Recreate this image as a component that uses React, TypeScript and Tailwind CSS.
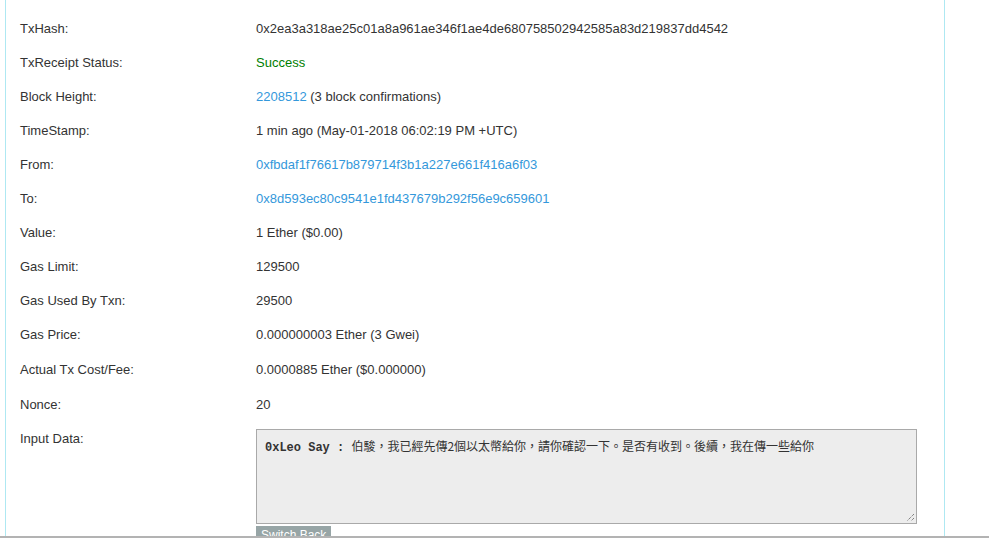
import React from "react";

const rows: { label: string; value: React.ReactNode }[] = [
  { label: "TxHash:", value: "0x2ea3a318ae25c01a8a961ae346f1ae4de680758502942585a83d219837dd4542" },
  { label: "TxReceipt Status:", value: <span className="text-[#008000]">Success</span> },
  {
    label: "Block Height:",
    value: (
      <>
        <span className="text-[#3498db]">2208512</span> (3 block confirmations)
      </>
    ),
  },
  { label: "TimeStamp:", value: "1 min ago (May-01-2018 06:02:19 PM +UTC)" },
  { label: "From:", value: <span className="text-[#3498db]">0xfbdaf1f76617b879714f3b1a227e661f416a6f03</span> },
  { label: "To:", value: <span className="text-[#3498db]">0x8d593ec80c9541e1fd437679b292f56e9c659601</span> },
  { label: "Value:", value: "1 Ether ($0.00)" },
  { label: "Gas Limit:", value: "129500" },
  { label: "Gas Used By Txn:", value: "29500" },
  { label: "Gas Price:", value: "0.000000003 Ether (3 Gwei)" },
  { label: "Actual Tx Cost/Fee:", value: "0.0000885 Ether ($0.000000)" },
  { label: "Nonce:", value: "20" },
];

const heights = ["h-[34px]", "h-[34px]", "h-[34px]", "h-[34px]", "h-[34px]", "h-[34px]", "h-[34px]", "h-[34px]", "h-[34px]", "h-[34px]", "h-[35px]", "h-[35px]"];

export default function App() {
  return (
    <div className="w-[989px] h-[538px] overflow-hidden bg-white flex flex-col" style={{ fontFamily: '"Liberation Sans", Arial, sans-serif' }}>
      <div className="h-[536px] overflow-hidden flex">
        <div className="ml-[5px] w-[940px] h-full border-l border-r border-[#aee8f2] pt-[12px] text-[13px] text-[#333]">
          {rows.map((r, i) => (
            <div key={r.label} className={`flex items-center ${heights[i]}`}>
              <div className="w-[250px] pl-[14px] shrink-0">{r.label}</div>
              <div className="whitespace-nowrap">{r.value}</div>
            </div>
          ))}
          <div className="flex">
            <div className="w-[250px] pl-[14px] shrink-0 h-[34px] flex items-center">Input Data:</div>
            <div className="pt-[7px]">
              <div className="relative w-[661px] h-[95px] border border-[#a9a9a9] bg-[#ededed] px-[8px] pt-[8px] text-[12px] text-[#333] leading-[16px] whitespace-nowrap">
                <span className="font-bold" style={{ fontFamily: '"Liberation Mono", "Courier New", monospace' }}>
                  0xLeo Say :{" "}
                </span>
                <span style={{ fontFamily: '"Noto Sans CJK TC", "Liberation Sans", sans-serif' }}>
                  伯駿，我已經先傳2個以太幣給你，請你確認一下。是否有收到。後續，我在傳一些給你
                </span>
                <svg className="absolute right-[1px] bottom-[1px]" width="9" height="9" viewBox="0 0 9 9">
                  <line x1="8" y1="1" x2="1" y2="8" stroke="#555" strokeWidth="1" strokeDasharray="1 1" />
                  <line x1="8" y1="5" x2="5" y2="8" stroke="#555" strokeWidth="1" strokeDasharray="1 1" />
                </svg>
              </div>
              <div className="mt-[2px] inline-block bg-[#97a5a6] text-white text-[12px] px-[5px] pt-[1px] leading-[16px]">
                Switch Back
              </div>
            </div>
          </div>
        </div>
      </div>
      <div className="h-[2px] bg-[#b3b3b3]" />
    </div>
  );
}
